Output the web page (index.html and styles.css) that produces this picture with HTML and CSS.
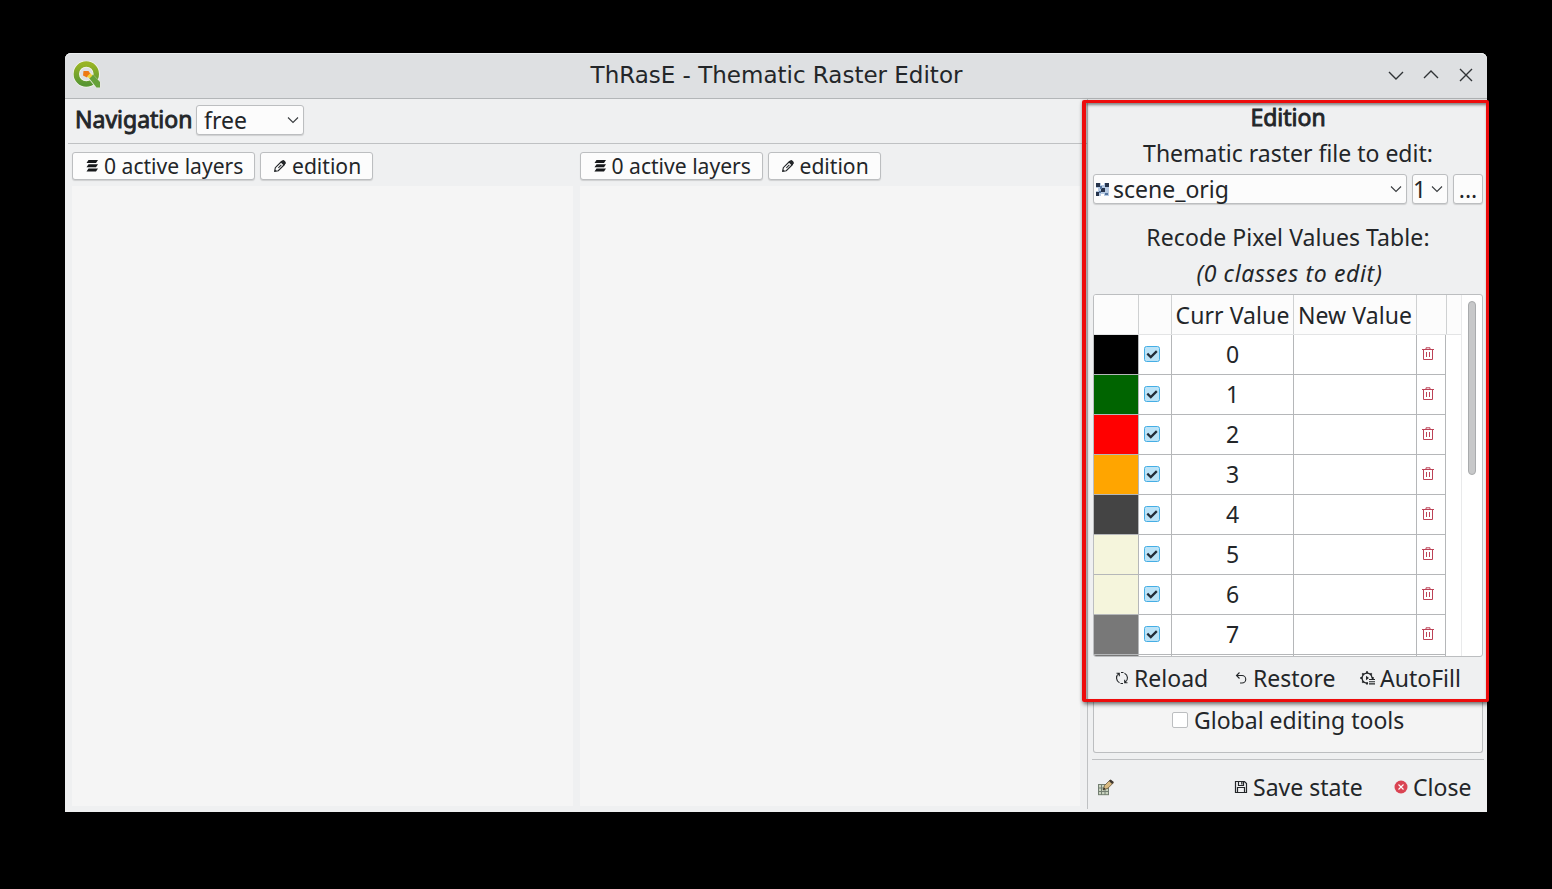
FILE: index.html
```html
<!DOCTYPE html>
<html lang="en">
<head>
<meta charset="utf-8">
<title>ThRasE - Thematic Raster Editor</title>
<link rel="stylesheet" href="styles.css">
</head>
<body>
<svg width="0" height="0" class="defs">
  <defs>
    <symbol id="i-layers" viewBox="0 0 14 14"><path d="M3.500 1h9.500l-2 3H1.500zM3.500 5.200h9.500l-2 3H1.500zM3.500 9.400h9.500l-2 3H1.500z" fill="#16181a"/></symbol>
    <symbol id="i-pencil" viewBox="0 0 14 14"><path d="M1.700 12.300l.6-3.600 6.200-6.200c.7-.7 3.700 2.200 3 3L5.300 11.700z" fill="none" stroke="#232629" stroke-width="1.100"/><path d="M7.600 3.200l2-2c1-.8 4 2.200 3.200 3.200l-2 2zM1.500 12.500l.3-2 1.700 1.700zM5 8.600l3-3 .7.700-3 3z" fill="#232629"/></symbol>
    <symbol id="i-down" viewBox="0 0 12 8"><path d="M1 1.500l5 5 5-5" fill="none" stroke="#383b3e" stroke-width="1.100"/></symbol>
    <symbol id="i-trash" viewBox="0 0 14 14"><path d="M1 2.500h12M5 2V.8h4V2M2.500 3v9.500h9V3M5.500 5v5M8.500 5v5" fill="none" stroke="#bd4256" stroke-width="1"/></symbol>
    <symbol id="i-check" viewBox="0 0 16 16"><rect x=".5" y=".5" width="15" height="15" rx="2" fill="#bce3f7" stroke="#45aee5"/><path d="M3.300 7.600l3.500 3.500 6-6" fill="none" stroke="#232d38" stroke-width="2.200"/></symbol>
  </defs>
</svg>
<div class="window">
  <header class="titlebar">
    <svg class="logo" viewBox="0 0 28 28"><defs><linearGradient id="g" x2="0" y2="1"><stop stop-color="#98b425"/><stop offset="1" stop-color="#589632"/></linearGradient></defs><circle cx="13.300" cy="13" r="10" fill="none" stroke="#f4f6ee" stroke-width="7"/><circle cx="13.300" cy="13" r="10" fill="none" stroke="url(#g)" stroke-width="5.400"/><path d="M12.500 14l5-3 10 10v5.500h-5z" fill="#e9ece0"/><path d="M16 17l4-3.500 7 7.500v5.500h-3.500z" fill="#65a139"/><path d="M10.500 10h5l2 3-3.500 3.500-4-2z" fill="#ee7913"/><path d="M14 15.500l3.300-3.300 2.200 2.300-3 3z" fill="#f2d43d"/></svg>
    <h1 class="title">ThRasE - Thematic Raster Editor</h1>
    <div class="controls">
      <svg viewBox="0 0 16 16"><path d="M1 5l7 7 7-7"/></svg>
      <svg viewBox="0 0 16 16"><path d="M1 11l7-7 7 7"/></svg>
      <svg viewBox="0 0 16 16"><path d="M2 2l12 12M14 2L2 14"/></svg>
    </div>
  </header>
  <div class="content">
    <main class="left">
      <div class="nav"><span class="heading nav-label">Navigation</span><div class="box combo free"><span class="t-free">free</span><svg class="arrow"><use href="#i-down"/></svg></div></div>
      <div class="views">
        <section class="view"><div class="tools"><button class="box b-layers"><svg class="ic"><use href="#i-layers"/></svg><span class="t-layers">0 active layers</span></button><button class="box b-edit"><svg class="ic"><use href="#i-pencil"/></svg><span class="t-edit">edition</span></button></div><div class="canvas"></div></section>
        <section class="view"><div class="tools"><button class="box b-layers"><svg class="ic"><use href="#i-layers"/></svg><span class="t-layers">0 active layers</span></button><button class="box b-edit"><svg class="ic"><use href="#i-pencil"/></svg><span class="t-edit">edition</span></button></div><div class="canvas"></div></section>
      </div>
    </main>
    <aside class="panel">
      <div class="line l-edition"><span class="heading t-edition">Edition</span></div>
      <div class="line l-file"><span class="t-file">Thematic raster file to edit:</span></div>
      <div class="picker">
        <div class="box combo scene"><svg class="raster" viewBox="0 0 13 13" shape-rendering="crispEdges"><path fill="#b5c9e2" d="M0 0h13v13H0z"/><path fill="#26344c" d="M0 0h4v4H0zM9 0h4v4H9zM5 5h4v4H5zM0 9h3v4H0z"/><path fill="#54759f" d="M4 3h2v3H4zM3 8h2v2H3zM9 10h3v2H9z"/><path fill="#fff" d="M5 0h3v2H5zM0 5h2v3H0zM5 11h3v2H5z"/></svg><span class="t-scene">scene_orig</span><svg class="arrow"><use href="#i-down"/></svg></div>
        <div class="box combo band"><span>1</span><svg class="arrow"><use href="#i-down"/></svg></div>
        <button class="box more"><span>...</span></button>
      </div>
      <div class="line l-recode"><span class="t-recode">Recode Pixel Values Table:</span></div>
      <div class="line l-classes"><span class="t-classes">(0 classes to edit)</span></div>
      <div class="table-box">
        <div class="table">
          <div class="row head"><i></i><i></i><span><b class="t-curr">Curr Value</b></span><span><b class="t-new">New Value</b></span><i></i></div>
          <div class="row"><i class="sw c0"></i><i><svg class="check"><use href="#i-check"/></svg></i><span>0</span><span></span><i><svg class="trash"><use href="#i-trash"/></svg></i></div>
          <div class="row"><i class="sw c1"></i><i><svg class="check"><use href="#i-check"/></svg></i><span>1</span><span></span><i><svg class="trash"><use href="#i-trash"/></svg></i></div>
          <div class="row"><i class="sw c2"></i><i><svg class="check"><use href="#i-check"/></svg></i><span>2</span><span></span><i><svg class="trash"><use href="#i-trash"/></svg></i></div>
          <div class="row"><i class="sw c3"></i><i><svg class="check"><use href="#i-check"/></svg></i><span>3</span><span></span><i><svg class="trash"><use href="#i-trash"/></svg></i></div>
          <div class="row"><i class="sw c4"></i><i><svg class="check"><use href="#i-check"/></svg></i><span>4</span><span></span><i><svg class="trash"><use href="#i-trash"/></svg></i></div>
          <div class="row"><i class="sw c5"></i><i><svg class="check"><use href="#i-check"/></svg></i><span>5</span><span></span><i><svg class="trash"><use href="#i-trash"/></svg></i></div>
          <div class="row"><i class="sw c5"></i><i><svg class="check"><use href="#i-check"/></svg></i><span>6</span><span></span><i><svg class="trash"><use href="#i-trash"/></svg></i></div>
          <div class="row"><i class="sw c7"></i><i><svg class="check"><use href="#i-check"/></svg></i><span>7</span><span></span><i><svg class="trash"><use href="#i-trash"/></svg></i></div>
          <div class="row sliver"><i class="sw c7"></i><i></i><span></span><span></span><i></i></div>
        </div>
        <div class="scroll"><div class="thumb"></div></div>
      </div>
      <div class="actions">
        <div class="act a-reload"><svg class="ic" viewBox="0 0 14 14"><path d="M4.500 11.700A5.300 5.300 0 0 1 3.800 2.600M1.500 2.300h2.800v2.900M9.500 2.300a5.300 5.300 0 0 1 .7 9.100M12.500 11.700H9.700V8.800M6 1.500h2.500M5.500 12.500H8"/></svg><span class="t-reload">Reload</span></div>
        <div class="act a-restore"><svg class="ic" viewBox="0 0 14 14"><path d="M5.500 1.500L2.500 4.500l3 3M2.500 4.500H8a3.700 3.700 0 0 1 0 7.500H6"/></svg><span class="t-restore">Restore</span></div>
        <div class="act a-auto"><svg class="ic gear" viewBox="0 0 15 14"><path d="M8 12A5 5 0 1 1 12 6.800" stroke-width="1.300"/><path d="M7 .2v2M7 11.500v2M.3 7h2M11.700 7h2M2.300 2.300l1.300 1.300M11.700 2.300l-1.300 1.300M2.300 11.700l1.300-1.300" stroke-width="1.900"/><path d="M6 4.800L9 7 6 9.200z" fill="#232629" stroke="none"/><path d="M9 8.500h6M9 10.700h6M9 12.900h6"/></svg><span class="t-auto">AutoFill</span></div>
      </div>
      <div class="global"><div class="empty-check"></div><span class="t-global">Global editing tools</span></div>
      <footer class="foot">
        <svg class="grid-pencil" viewBox="0 0 17 17"><path d="M1 5h10v11H1z" fill="#c9d3bf"/><path d="M1.500 5v11M4.500 5v11M8 5v11M11.500 7v9M1 5.500h10M1 9h10M1 12.500h10M1 15.700h11" fill="none" stroke="#737f72"/><path d="M6 11l1.500-4.500L13 1l3.500 2.700-5.500 5.500z" fill="#d8b980" stroke="#6a583e" stroke-width=".8"/><path d="M12 2l1.600-1.500L16.800 3l-1.700 2z" fill="#3e3730"/><path d="M6 11l1-2.500 1.500 1.500z" fill="#262b26"/></svg>
        <div class="act a-save"><svg class="ic" viewBox="0 0 14 14"><path d="M1.500 1.500h9l2 2v9h-11zM4.500 1.500v4h5v-4M7.800 2v2.500M3.500 12.500v-5h7v5" stroke-width="1.200"/></svg><span class="t-save">Save state</span></div>
        <div class="act a-close"><svg class="ic" viewBox="0 0 14 14"><circle cx="7" cy="7" r="6.500" fill="#da4453" stroke="none"/><path class="cross" d="M4.500 4.500l5 5M9.500 4.500l-5 5"/></svg><span class="t-close">Close</span></div>
      </footer>
    </aside>
  </div>
  <div class="highlight"></div>
</div>
</body>
</html>
```
FILE: styles.css
```css
* { box-sizing: border-box; }
body { margin: 0; width: 1552px; height: 889px; padding: 53px 65px; background: #000; overflow: hidden; color: #232629; font: 23px/30px "Noto Sans", sans-serif; }
svg { display: block; flex: none; }
span, b { white-space: nowrap; }
.defs { position: absolute; }
.window { position: relative; width: 1422px; height: 759px; background: #eff0f1; border-radius: 6px 6px 0 0; display: flex; flex-direction: column; }
.titlebar { height: 46px; flex: none; display: flex; align-items: center; justify-content: space-between; padding: 0 13px 2px 8px; background: #dee0e2; border-bottom: 1px solid #b3b6b8; border-radius: 6px 6px 0 0; box-shadow: inset 0 1px #eceeef; }
.logo { width: 28px; height: 28px; margin-right: 64px; }
.title { margin: 0; font: 400 23px/30px "DejaVu Sans", sans-serif; }
.controls { display: flex; gap: 19px; }
.controls svg { width: 16px; height: 16px; fill: none; stroke: #303336; stroke-width: 1.400; }
.content { flex: 1; display: flex; min-height: 0; }
.left { width: 1022px; display: flex; flex-direction: column; }
.nav { height: 45px; margin-left: 3px; padding: 6px 0 0 7px; border-bottom: 1px solid #bfc1c3; display: flex; }
.heading { -webkit-text-stroke: .9px #232629; }
.nav-label { width: 121px; line-height: 29px; }
.box { border: 1px solid #bcbec0; border-radius: 3px; background: #fcfcfc; display: flex; align-items: center; box-shadow: 0 1px 1px #0002; font: inherit; color: inherit; padding: 0; }
.combo { justify-content: space-between; }
.box > span { padding-bottom: 1px; }
.arrow { width: 12px; height: 8px; }
.free { width: 108px; height: 30px; padding: 0 4px 0 7px; }
.views { flex: 1; display: flex; padding: 8px 7px 6px 7px; gap: 7px; }
.view { width: 501px; display: flex; flex-direction: column; gap: 6px; }
.tools { display: flex; gap: 5px; }
.tools .box { height: 28px; padding-left: 12px; gap: 5px; font-size: 21.100px; line-height: 26px; }
.tools .box > span { padding-bottom: 0; }
.ic { width: 14px; height: 14px; }
.b-layers { width: 183px; }
.b-edit { width: 113px; }
.canvas { flex: 1; background: #f5f5f5; }
.panel { width: 400px; border-left: 1px solid #bfc1c3; margin-bottom: 3px; padding: 0 4px 0 5px; display: flex; flex-direction: column; }
.line { height: 36px; display: flex; justify-content: center; align-items: center; }
.picker { display: flex; gap: 5px; height: 30px; margin-top: 3px; }
.scene { width: 314px; padding: 0 4px 0 2px; }
.raster { width: 13px; height: 13px; margin-right: 4px; }
.t-scene { flex: 1; }
.band { width: 36px; padding: 0 4px 0 0; }
.more { width: 30px; justify-content: center; }
.l-recode { margin-top: 15px; }
.t-recode { letter-spacing: .08px; }
.t-classes { font-style: italic; letter-spacing: .64px; padding-left: 3px; }
.table-box { height: 363px; margin-top: 3px; flex: none; border: 1px solid #bcbec0; border-radius: 3px; background: #fff; display: flex; overflow: hidden; }
.table { width: 367px; }
.row { height: 40px; display: grid; grid-template-columns: 45px 33px 122px 123px 29px; }
.row > * { border-right: 1px solid #b5b7b9; border-bottom: 1px solid #b5b7b9; padding-bottom: 2px; display: flex; align-items: center; justify-content: center; }
.head { grid-template-columns: 45px 33px 122px 123px 30px; background: #fcfcfc; border-bottom: 1px solid #e3e4e5; }
.head > * { border-bottom: 0; border-right-color: #cfd1d2; padding-bottom: 0; }
.head b { font-weight: 400; letter-spacing: .08px; }
.sliver { height: 2px; overflow: hidden; }
.sliver > * { border-bottom: 0; }
.check { width: 16px; height: 16px; margin-right: 6px; }
.trash { width: 14px; height: 14px; margin-right: 6px; }
.c0 { background: #000; } .c1 { background: #006400; } .c2 { background: #f00; } .c3 { background: #ffa500; } .c4 { background: #444; } .c5 { background: #f5f5dc; } .c7 { background: #787878; }
.scroll { flex: 1; border-left: 1px solid #e9eaeb; padding: 6px 0 0 6px; }
.thumb { width: 8px; height: 174px; border-radius: 4px; background: #c7c8c9; border: 1px solid #a9abad; }
.actions { height: 45px; display: flex; padding: 6px 0 0 22px; }
.act { display: flex; align-items: center; height: 30px; gap: 5px; }
.act svg { fill: none; stroke: #232629; stroke-width: 1.100; }
.a-reload { width: 119px; }
.a-restore { width: 126px; }
.a-auto .gear { width: 15px; }
.act .cross { stroke: #fff; }
.global { height: 51px; border: 1px solid #bcbec0; border-top: 0; border-radius: 0 0 3px 3px; background: #f4f4f4; display: flex; padding: 3px 0 0 78px; gap: 6px; }
.empty-check { width: 16px; height: 16px; margin-top: 7px; border: 1px solid #bcbec0; border-radius: 2px; background: #fff; }
.foot { border-top: 1px solid #bfc1c3; margin: 6px -1px 0; padding: 12px 0 0 5px; display: flex; align-items: center; }
.grid-pencil { width: 17px; height: 17px; margin-right: 120px; }
.a-save { width: 160px; }
.highlight { position: absolute; left: 1017px; top: 47px; width: 407px; height: 602px; border: 3px solid #ed0c0c; border-left-width: 4px; border-radius: 2px; box-shadow: 1px 2px 4px #0009, inset 1px 2px 3px #0007; }
```
